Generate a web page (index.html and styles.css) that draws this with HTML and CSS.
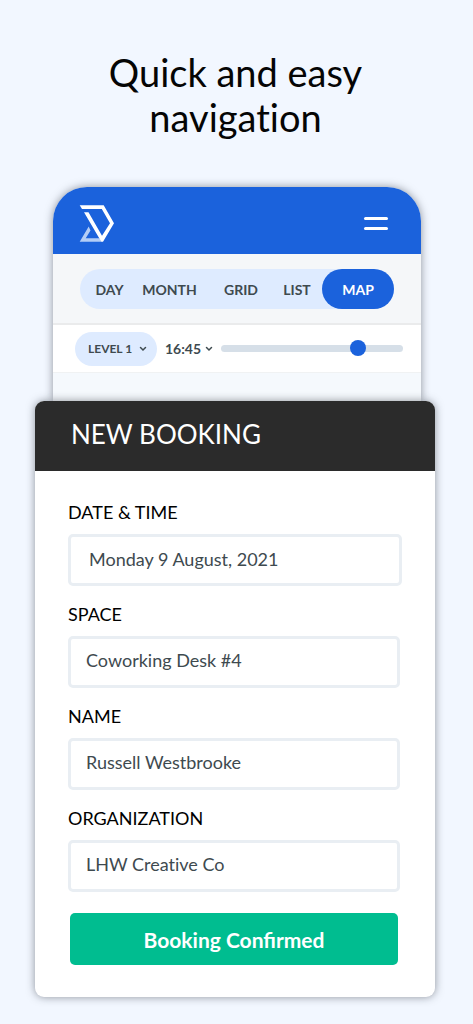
FILE: index.html
```html
<!DOCTYPE html>
<html lang="en">
<head>
<meta charset="utf-8">
<meta name="viewport" content="width=device-width, initial-scale=1">
<title>New Booking</title>
<link rel="stylesheet" href="styles.css">
</head>
<body>
<main class="page">
  <h1 class="headline">Quick and easy<br>navigation</h1>
  <section class="phone">
    <header class="topbar">
      <svg class="logo" viewBox="0 0 36 38" width="36" height="38" aria-label="Logo" role="img">
        <path class="logo-soft" d="M9.700 22.500 L11.500 26.500 L6.700 34.200 H20.500 L22.500 37.800 H0.700 Z"/>
        <path class="logo-main" d="M0.700 1.200 H24.700 L35 19.300 L24 37.800 H22.300 L5 8.200 H9.500 L23 31.800 L31 19.300 L22.800 4.900 H3 Z"/>
      </svg>
      <button class="menu" type="button" aria-label="Menu"><span class="menu-line"></span><span class="menu-line"></span></button>
    </header>
    <div class="views">
      <nav class="tabs">
        <button class="tab tab-day" type="button">DAY</button>
        <button class="tab tab-month" type="button">MONTH</button>
        <button class="tab tab-grid" type="button">GRID</button>
        <button class="tab tab-list" type="button">LIST</button>
        <button class="tab tab-active" type="button">MAP</button>
      </nav>
    </div>
    <div class="filters">
      <div class="picker picker-level">
        <select class="select" aria-label="Level"><option>LEVEL 1</option></select>
        <svg class="chevron" viewBox="0 0 8 6" width="8" height="6"><path d="M1.500 1.500 L4 4 L6.500 1.500"/></svg>
      </div>
      <div class="picker picker-time">
        <select class="select" aria-label="Time"><option>16:45</option></select>
        <svg class="chevron" viewBox="0 0 8 6" width="8" height="6"><path d="M1.500 1.500 L4 4 L6.500 1.500"/></svg>
      </div>
      <input class="slider" type="range" min="0" max="100" value="78" aria-label="Time of day">
    </div>
    <div class="map"></div>
  </section>
  <section class="card">
    <h2 class="card-title">NEW BOOKING</h2>
    <form class="form">
      <div class="field field-date">
        <label class="label" for="date">DATE &amp; TIME</label>
        <input class="input" id="date" type="text" value="Monday 9 August, 2021">
      </div>
      <div class="field">
        <label class="label" for="space">SPACE</label>
        <input class="input" id="space" type="text" value="Coworking Desk #4">
      </div>
      <div class="field">
        <label class="label" for="name">NAME</label>
        <input class="input" id="name" type="text" value="Russell Westbrooke">
      </div>
      <div class="field">
        <label class="label" for="org">ORGANIZATION</label>
        <input class="input" id="org" type="text" value="LHW Creative Co">
      </div>
      <button class="confirm" type="button">Booking Confirmed</button>
    </form>
  </section>
</main>
</body>
</html>
```

FILE: styles.css
```css
* { box-sizing: border-box; }

body {
  margin: 0;
  background: #f2f7ff;
  font-family: Lato, "Open Sans", sans-serif;
  font-variant-ligatures: none;
  color: #3e4a4f;
}

button, input, select {
  margin: 0;
  border: 0;
  padding: 0;
  font-family: inherit;
  font-variant-ligatures: inherit;
  color: inherit;
  background: none;
}

.page { padding: 50px 37px 27px 35px; }

.headline {
  margin: 0 0 47px;
  font-size: 38px;
  line-height: 45px;
  font-weight: 400;
  text-align: center;
  color: #050505;
}

.phone {
  margin: 0 15px 0 18px;
  border-radius: 34px 34px 0 0;
  overflow: hidden;
  background: #f5f9fd;
  box-shadow: 0 0 9px rgba(40, 45, 55, 0.5);
}

.topbar {
  display: flex;
  align-items: center;
  justify-content: space-between;
  height: 67px;
  padding: 5px 33px 0 26px;
  background: #1b62dc;
}

.logo-main { fill: #fff; }
.logo-soft { fill: #b3cdf6; }

.menu {
  display: grid;
  gap: 7px;
  width: 24px;
}

.menu-line {
  height: 3px;
  border-radius: 2px;
  background: #fff;
}

.views {
  padding: 15px 27px 14px;
  border-bottom: 2px solid #eaebec;
  background: #f5f7f9;
}

.tabs {
  display: flex;
  height: 40px;
  border-radius: 20px;
  background: #deebff;
}

.tab {
  flex: 1 1 59px;
  font-size: 14px;
  font-weight: 700;
}

.tab-month { flex-basis: 61px; }
.tab-grid { flex-basis: 82px; }
.tab-list {
  flex-basis: 40px;
  padding-right: 10px;
}

.tab-active {
  flex-basis: 72px;
  border-radius: 20px;
  background: #1b62dc;
  color: #fff;
}

.filters {
  display: flex;
  align-items: center;
  height: 48px;
  padding: 0 18px 0 22px;
  border-bottom: 1px solid #f0f2f3;
  background: #fff;
}

.picker {
  display: flex;
  flex: none;
  align-items: center;
}

.picker-level {
  gap: 6px;
  height: 34px;
  margin-right: 8px;
  padding: 0 10px 0 13px;
  border-radius: 17px;
  background: #deebff;
  font-size: 12px;
}

.picker-time {
  gap: 3px;
  margin-right: 8px;
  font-size: 14px;
}

.select {
  appearance: none;
  font-size: inherit;
  font-weight: 700;
}

.chevron {
  fill: none;
  stroke: #3e4a4f;
  stroke-width: 1.5;
  stroke-linecap: round;
}

.slider {
  appearance: none;
  flex: 1;
  min-width: 0;
  height: 16px;
}

.slider::-webkit-slider-runnable-track {
  height: 7px;
  border-radius: 4px;
  background: #d6dfe8;
}

.slider::-webkit-slider-thumb {
  appearance: none;
  width: 16px;
  height: 16px;
  margin-top: -5px;
  border-radius: 50%;
  background: #1b62dc;
}

.map { height: 28px; }

.card {
  position: relative;
  margin-right: 1px;
  border-radius: 9px;
  overflow: hidden;
  background: #fff;
  box-shadow: 0 0 8px rgba(40, 45, 55, 0.5);
}

.card-title {
  margin: 0;
  padding: 0 36px 4px;
  font-size: 26px;
  line-height: 66px;
  font-weight: 400;
  color: #fff;
  background: #2b2b2b;
}

.form {
  display: grid;
  gap: 16px;
  padding: 29px 35px 32px 33px;
}

.field {
  display: grid;
  gap: 10px;
}

.label {
  font-size: 18px;
  line-height: 24px;
  color: #000;
}

.input {
  width: 100%;
  height: 52px;
  padding: 0 15px 4px;
  border: 3px solid #e9eef3;
  border-radius: 5px;
  font-size: 18px;
}

.field-date { margin-right: -2px; }
.field-date .input { padding: 0 18px 2px; }

.confirm {
  height: 52px;
  margin: 5px 2px 0;
  border-radius: 5px;
  background: #00bd90;
  color: #fff;
  font-size: 21px;
  font-weight: 700;
  font-variant-ligatures: normal;
}
```
